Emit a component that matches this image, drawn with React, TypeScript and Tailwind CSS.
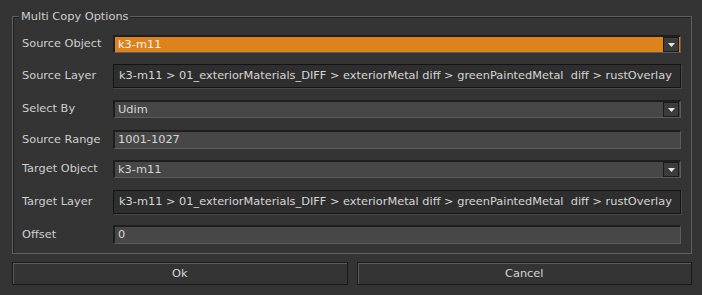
const font = "font-['Tahoma','DejaVu_Sans',sans-serif]";

const Arrow = () => (
  <div className="flex h-[15px] w-[16px] shrink-0 items-center justify-center border border-[#1c1c1c] bg-[#3c3c3c]">
    <svg width="7" height="4" viewBox="0 0 7 4">
      <path d="M0 0h7L3.5 4z" fill="#e8e8e8" />
    </svg>
  </div>
);

const Combo = ({ value, orange }: { value: string; orange?: boolean }) => (
  <div
    className={
      "flex h-[18px] flex-1 items-center border-t-2 border-l-2 border-t-[#1e1e1e] border-l-[#1e1e1e] border-b border-r border-b-[#5c5c5c] border-r-[#5c5c5c] pl-[3px] pr-[1px] " +
      (orange ? "bg-[#dc831b] text-[#f4f4f4]" : "bg-[#474747] text-[#d6d6d6]")
    }
  >
    <span className="flex-1 leading-none">{value}</span>
    <Arrow />
  </div>
);

const Field = ({ value }: { value: string }) => (
  <div className="flex h-[19px] flex-1 items-center border-t-2 border-l-2 border-t-[#1e1e1e] border-l-[#1e1e1e] border-b border-r border-b-[#5c5c5c] border-r-[#5c5c5c] bg-[#474747] pl-[3px] text-[#d6d6d6]">
    <span className="leading-none">{value}</span>
  </div>
);

const LayerButton = ({ value }: { value: string }) => (
  <div className="flex h-[24px] flex-1 items-center border border-[#141414] bg-[#2e2e2e] pl-[5px] text-[#d6d6d6] shadow-[1px_1px_0_#4a4a4a]">
    <span className="whitespace-pre leading-none">{value}</span>
  </div>
);

const Row = ({ label, children, mt }: { label: string; children: React.ReactNode; mt: string }) => (
  <div className={"flex items-center " + mt}>
    <div className="w-[100px] shrink-0 whitespace-nowrap pl-[9px] text-[#cfcfcf]">{label}</div>
    {children}
  </div>
);

const layer = "k3-m11 > 01_exteriorMaterials_DIFF > exteriorMetal diff > greenPaintedMetal  diff > rustOverlay";

export default function App() {
  return (
    <div className={"h-[295px] w-[702px] bg-[#343434] pl-3 pr-[10px] pt-[16px] text-[11.35px] " + font}>
      <div className="relative border border-[#5e5e5e] pb-[9px] pr-[10px] pt-[18px] shadow-[inset_1px_1px_0_#222]">
        <div className="absolute left-[6px] top-[-8px] bg-[#343434] px-[2px] leading-[14px] text-[#cfcfcf]">
          Multi Copy Options
        </div>
        <Row label="Source Object" mt="">
          <Combo value="k3-m11" orange />
        </Row>
        <Row label="Source Layer" mt="mt-[11px]">
          <LayerButton value={layer} />
        </Row>
        <Row label="Select By" mt="mt-[12px]">
          <Combo value="Udim" />
        </Row>
        <Row label="Source Range" mt="mt-[12px]">
          <Field value="1001-1027" />
        </Row>
        <Row label="Target Object" mt="mt-[11px]">
          <Combo value="k3-m11" />
        </Row>
        <Row label="Target Layer" mt="mt-[12px]">
          <LayerButton value={layer} />
        </Row>
        <Row label="Offset" mt="mt-[11px]">
          <Field value="0" />
        </Row>
      </div>
      <div className="mt-[8px] flex gap-[9px]">
        <div className="flex h-[23px] flex-1 items-center justify-center border border-[#1a1a1a] bg-[#343434] text-[#d6d6d6] shadow-[inset_1px_1px_0_#5a5a5a]">
          Ok
        </div>
        <div className="flex h-[23px] flex-1 items-center justify-center border border-[#1a1a1a] bg-[#343434] text-[#d6d6d6] shadow-[inset_1px_1px_0_#5a5a5a]">
          Cancel
        </div>
      </div>
    </div>
  );
}
